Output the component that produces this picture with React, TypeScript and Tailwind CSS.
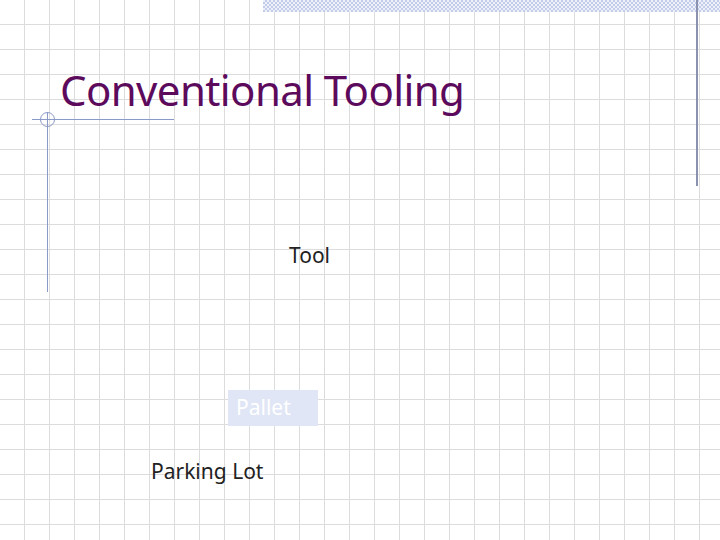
export default function App() {
  const grid =
    "repeating-linear-gradient(to right, transparent 0 24px, #dcdcdc 24px 25px), repeating-linear-gradient(to bottom, transparent 0 24px, #dcdcdc 24px 25px)";
  return (
    <div className="relative w-[720px] h-[540px] overflow-hidden bg-white">
      {/* grid paper */}
      <div className="absolute inset-0" style={{ backgroundImage: grid }} />

      {/* top checkered band */}
      <div
        className="absolute left-[263px] top-0 w-[457px] h-[12px]"
        style={{
          backgroundImage: "repeating-conic-gradient(#c3cdea 0 25%, #eef1fa 0 50%)",
          backgroundSize: "4px 4px",
        }}
      />
      <div className="absolute left-[696px] top-0 w-[2px] h-[186px] bg-[#8a92b0]" />

      {/* crosshair decoration */}
      <div className="absolute left-[32px] top-[119px] w-[142px] h-px bg-[#8a9ac8]" />
      <div className="absolute left-[47px] top-[112px] w-px h-[180px] bg-[#8a9ac8]" />
      <div className="absolute left-[40px] top-[112px] w-[15px] h-[15px] rounded-full border border-[#8a9ac8]" />

      <h1 className="absolute left-[60px] top-[69px] text-[42px] leading-none text-[#5c0a5c] font-['DejaVu_Sans',sans-serif] tracking-[-0.6px]">
        Conventional Tooling
      </h1>

      <div className="absolute left-[289px] top-[240px] text-[21px] text-[#222] font-['Liberation_Serif',serif]">Tool</div>

      <div className="absolute left-[228px] top-[390px] w-[90px] h-[36px] bg-[#e0e6f6] flex items-center pl-[8px] text-[21px] text-white font-['Liberation_Serif',serif]">
        Pallet
      </div>

      <div className="absolute left-[151px] top-[456px] text-[21px] text-[#222] font-['Liberation_Serif',serif]">Parking Lot</div>
    </div>
  );
}
